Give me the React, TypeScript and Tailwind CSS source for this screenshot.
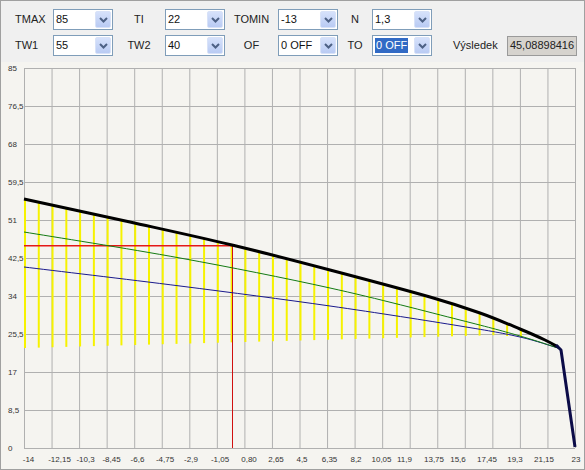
import React from 'react';

const FONT = "font-['Liberation_Sans',Arial,sans-serif]";

// chart geometry in page pixels
const PLOT_L = 24;
const PLOT_R = 575;
const PLOT_T = 68;
const PLOT_B = 448;
const COL = (PLOT_R - PLOT_L) / 20;

const yLabels = ['85', '76,5', '68', '59,5', '51', '42,5', '34', '25,5', '17', '8,5', '0'];
const xLabels: [string, number][] = [
    ['-14', 28.5], ['-12,15', 59.5], ['-10,3', 85.5], ['-8,45', 111.5], ['-6,6', 137.5],
    ['-4,75', 165], ['-2,9', 191], ['-1,05', 220], ['0,80', 249], ['2,65', 276],
    ['4,5', 302], ['6,35', 329.5], ['8,2', 356], ['10,05', 381.5], ['11,9', 404.5],
    ['13,75', 434], ['15,6', 458], ['17,45', 487], ['19,3', 515], ['21,15', 544], ['23', 576],
];

type Pt = [number, number];

const black: Pt[] = [
    [24, 199], [130, 222], [232, 245], [330, 270], [430, 297], [480, 313], [520, 329], [545, 340], [558, 347],
];
const green: Pt[] = [
    [24, 232], [180, 258], [330, 288], [460, 320], [520, 336], [558, 348],
];
const blue: Pt[] = [
    [24, 267], [180, 286], [330, 306], [460, 326], [520, 337], [558, 348],
];

// linear lookup, good enough for the yellow line tops
const interp = (pts: Pt[], x: number) => {
    for (let i = 0; i < pts.length - 1; i++) {
        const [x1, y1] = pts[i];
        const [x2, y2] = pts[i + 1];
        if (x >= x1 && x <= x2) return y1 + ((y2 - y1) * (x - x1)) / (x2 - x1);
    }
    return pts[pts.length - 1][1];
};

// catmull-rom through the points, as cubic beziers
const smoothPath = (pts: Pt[]) => {
    let d = `M${pts[0][0]},${pts[0][1]}`;
    for (let i = 0; i < pts.length - 1; i++) {
        const p0 = pts[i - 1] || pts[i];
        const p1 = pts[i];
        const p2 = pts[i + 1];
        const p3 = pts[i + 2] || p2;
        const c1x = p1[0] + (p2[0] - p0[0]) / 6;
        const c1y = p1[1] + (p2[1] - p0[1]) / 6;
        const c2x = p2[0] - (p3[0] - p1[0]) / 6;
        const c2y = p2[1] - (p3[1] - p1[1]) / 6;
        d += ` C${c1x.toFixed(1)},${c1y.toFixed(1)} ${c2x.toFixed(1)},${c2y.toFixed(1)} ${p2[0]},${p2[1]}`;
    }
    return d;
};

const Chevron: React.FC = () => (
    <svg width="9" height="6" viewBox="0 0 9 6">
        <path d="M1 1 L4.5 4.5 L8 1" fill="none" stroke="#4d6185" strokeWidth="2" />
    </svg>
);

const Combo: React.FC<{ value: string; selected?: boolean }> = ({ value, selected }) => (
    <div className="flex h-[21px] w-[60px] shrink-0 items-stretch border border-[#7f9db9] bg-white">
        <div className="flex flex-1 items-center pl-[2px] text-[11px] leading-none text-[#111]">
            {selected ? <span className="bg-[#316ac5] px-[1px] py-[2px] text-white">{value}</span> : value}
        </div>
        <div className="m-[1px] flex w-[16px] items-center justify-center rounded-[2px] border border-[#d8e2f8] bg-gradient-to-b from-[#d6e1fb] to-[#b9cbf3]">
            <Chevron />
        </div>
    </div>
);

const Label: React.FC<{ text: string; className: string }> = ({ text, className }) => (
    <div className={`shrink-0 text-[11px] text-[#222] ${className}`}>{text}</div>
);

const Chart: React.FC = () => {
    const yellow: { x: number; top: number; bottom: number }[] = [];
    for (let k = 0; k <= 36; k++) {
        const x = PLOT_L + k * (COL / 2);
        if (x > 528) break;
        const top = interp(black, x);
        const bottom = x < 500 ? 348 - (13 * (x - PLOT_L)) / 476 : 336;
        if (bottom > top) yellow.push({ x, top, bottom });
    }

    return (
        <svg width="583" height="407" className="block">
            <g transform="translate(-1,-62)" fontFamily="Liberation Sans, Arial, sans-serif">
                {/* grid */}
                {Array.from({ length: 21 }, (_, i) => (
                    <line key={`v${i}`} x1={PLOT_L + i * COL + 0.5} x2={PLOT_L + i * COL + 0.5} y1={PLOT_T} y2={PLOT_B} stroke="#b0b0b0" />
                ))}
                {yLabels.map((_, j) => (
                    <line key={`h${j}`} x1={PLOT_L} x2={PLOT_R} y1={PLOT_T + j * 38 + 0.5} y2={PLOT_T + j * 38 + 0.5} stroke="#b0b0b0" />
                ))}

                {yLabels.map((t, j) => (
                    <text key={`yl${j}`} x={8} y={PLOT_T + j * 38 + 3} fontSize="8" fill="#333">{t}</text>
                ))}
                {xLabels.map(([t, x], i) => (
                    <text key={`xl${i}`} x={x} y={462} fontSize="8" fill="#333" textAnchor="middle">{t}</text>
                ))}

                {/* yellow verticals */}
                {yellow.map((l, i) => (
                    <line key={`y${i}`} x1={l.x + 1} x2={l.x + 1} y1={l.top} y2={l.bottom} stroke="#f6f200" strokeWidth="2" />
                ))}

                {/* result marker */}
                <line x1={PLOT_L} x2={233} y1={245.75} y2={245.75} stroke="#e41818" strokeWidth="1.5" />
                <line x1={232.5} x2={232.5} y1={245.5} y2={PLOT_B} stroke="#d01010" />

                <path d={smoothPath(blue)} fill="none" stroke="#1a1a8c" strokeWidth="1" />
                <path d={smoothPath(green)} fill="none" stroke="#137a13" strokeWidth="1" />
                <path d={smoothPath(black)} fill="none" stroke="#000" strokeWidth="3" strokeLinejoin="round" />
                <polyline points="556,345 561,350 575,447" fill="none" stroke="#0c0c48" strokeWidth="3" strokeLinejoin="round" />
            </g>
        </svg>
    );
};

const App: React.FC = () => {
    return (
        <div className={`h-[470px] w-[585px] overflow-hidden border border-[#a0a0a0] ${FONT}`}>
            <div className="flex flex-col gap-[5px] bg-[#f0f0f0] pb-[6px] pl-[14px] pt-[8px]">
                <div className="flex h-[21px] items-center">
                    <Label text="TMAX" className="w-[38px]" />
                    <Combo value="85" />
                    <Label text="TI" className="w-[52px] text-center" />
                    <Combo value="22" />
                    <Label text="TOMIN" className="w-[53px] text-center" />
                    <Combo value="-13" />
                    <Label text="N" className="w-[34px] text-center" />
                    <Combo value="1,3" />
                </div>
                <div className="flex h-[21px] items-center">
                    <Label text="TW1" className="w-[38px]" />
                    <Combo value="55" />
                    <Label text="TW2" className="w-[52px] text-center" />
                    <Combo value="40" />
                    <Label text="OF" className="w-[53px] text-center" />
                    <Combo value="0 OFF" />
                    <Label text="TO" className="w-[34px] text-center" />
                    <Combo value="0 OFF" selected />
                    <Label text="Výsledek" className="w-[75px] pl-[21px]" />
                    <div className="flex h-[20px] w-[70px] items-center justify-center border border-[#9a9a9a] bg-[#d6d3ce] text-[11px] text-[#222]">
                        45,08898416
                    </div>
                </div>
            </div>
            <div className="bg-[#f5f4f0]">
                <Chart />
            </div>
        </div>
    );
};

export default App;
